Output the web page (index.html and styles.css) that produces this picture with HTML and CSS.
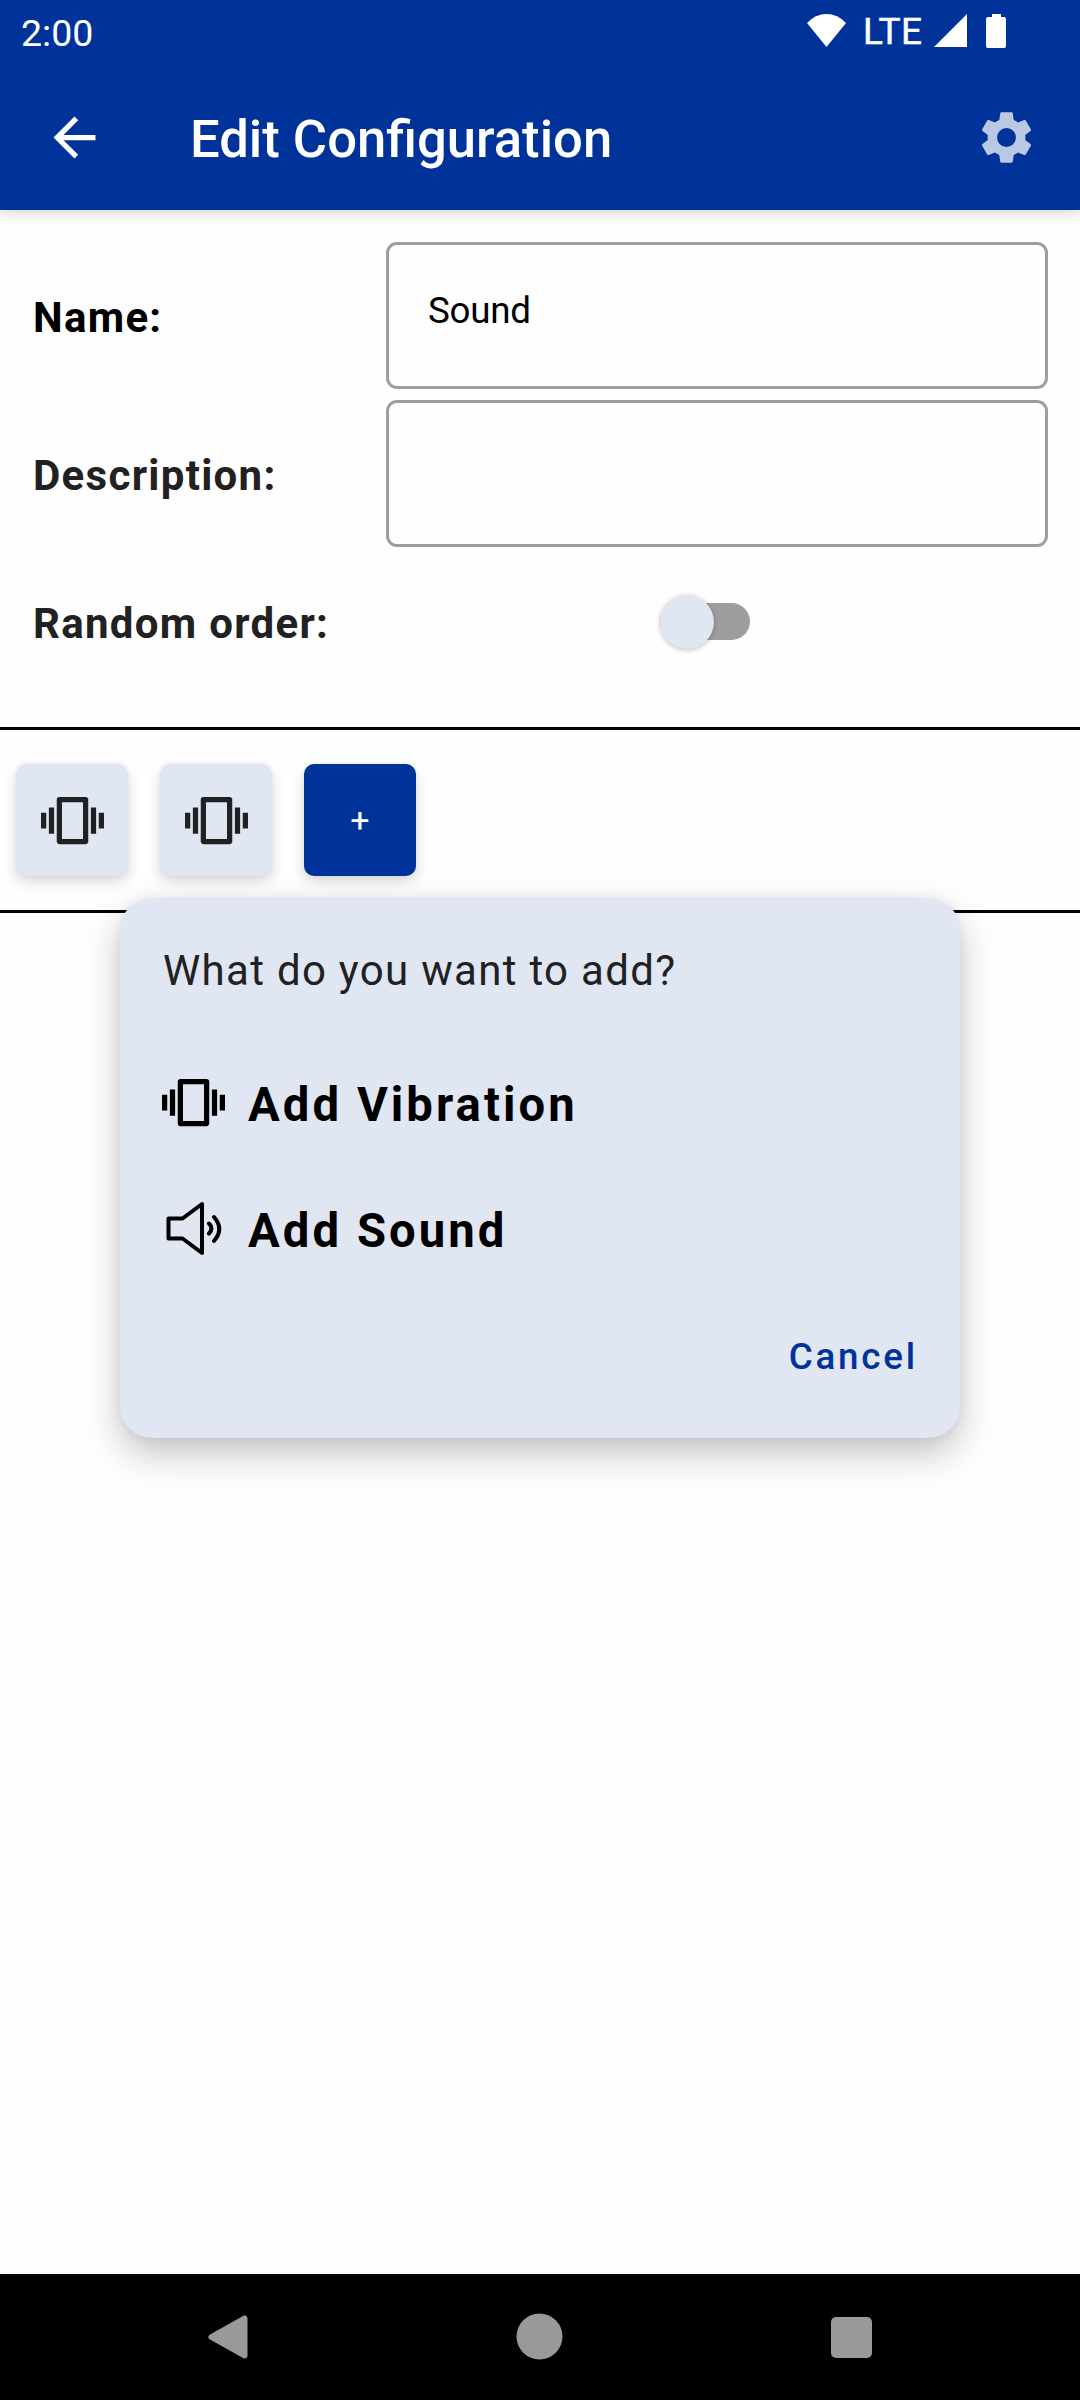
FILE: index.html
```html
<!DOCTYPE html>
<html lang="en">
<head>
<meta charset="utf-8">
<title>Edit Configuration</title>
<link rel="stylesheet" href="styles.css">
</head>
<body>
<svg class="defs" width="0" height="0" aria-hidden="true">
  <symbol id="vibration" viewBox="0 0 24 24"><path d="M0 15h2V9H0v6zm3 2h2V7H3v10zm19-8v6h2V9h-2zm-3 8h2V7h-2v10zM17 3H7C6.450 3 6 3.450 6 4v16c0 .55.45 1 1 1h10c.55 0 1-.45 1-1V4c0-.55-.45-1-1-1zM16 19H8V5h8v14z"/></symbol>
</svg>
<div class="screen">
  <header class="top">
    <div class="status">
      <span class="clock">2:00</span>
      <div class="indicators">
        <svg class="wifi" viewBox="0 0 39 33"><path d="M19.500 33L0 9Q8.500 0 19.500 0T39 9z"/></svg>
        <span class="lte">LTE</span>
        <svg class="signal" viewBox="0 0 32 32"><path d="M0 32L32 0v32z"/></svg>
        <svg class="battery" viewBox="0 0 20 34"><path d="M6 0h9v3h3a2 2 0 0 1 2 2v27a2 2 0 0 1-2 2H2a2 2 0 0 1-2-2V5a2 2 0 0 1 2-2h4z"/></svg>
      </div>
    </div>
    <div class="appbar">
      <svg class="icon" viewBox="0 0 24 24"><path d="M20 11H7.830l5.590-5.590L12 4l-8 8 8 8 1.410-1.410L7.830 13H20v-2z"/></svg>
      <h1 class="title">Edit Configuration</h1>
      <svg class="icon gear" viewBox="0 0 24 24"><path fill-rule="evenodd" d="M19.14,12.94c0.04-0.3,0.06-0.61,0.06-0.94c0-0.32-0.02-0.64-0.07-0.94l2.03-1.58c0.18-0.14,0.23-0.41,0.12-0.61l-1.92-3.32c-0.12-0.22-0.37-0.29-0.59-0.22l-2.39,0.96c-0.5-0.38-1.03-0.7-1.62-0.94L14.4,2.81c-0.04-0.24-0.24-0.41-0.48-0.41h-3.84c-0.24,0-0.43,0.17-0.47,0.41L9.25,5.35C8.66,5.59,8.12,5.92,7.63,6.29L5.24,5.33c-0.22-0.08-0.47,0-0.59,0.22L2.74,8.87C2.62,9.08,2.66,9.34,2.86,9.48l2.03,1.58C4.84,11.36,4.8,11.69,4.8,12s0.02,0.64,0.07,0.94l-2.03,1.58c-0.18,0.14-0.23,0.41-0.12,0.61l1.92,3.32c0.12,0.22,0.37,0.29,0.59,0.22l2.39-0.96c0.5,0.38,1.03,0.7,1.62,0.94l0.36,2.54c0.05,0.24,0.24,0.41,0.48,0.41h3.84c0.24,0,0.44-0.17,0.47-0.41l0.36-2.54c0.59-0.24,1.13-0.56,1.62-0.94l2.39,0.96c0.22,0.08,0.47,0,0.59-0.22l1.92-3.32c0.12-0.22,0.07-0.47-0.12-0.61L19.14,12.94zM12,15.600a3.600,3.600 0 1 1 0-7.200a3.600,3.600 0 1 1 0,7.200z"/></svg>
    </div>
  </header>
  <main class="content">
    <section class="form">
      <div class="row"><label class="label label-name">Name:</label><div class="field">Sound</div></div>
      <div class="row"><label class="label">Description:</label><div class="field"></div></div>
      <div class="row row-switch"><span class="label">Random order:</span><div class="switch"><span class="thumb"></span></div></div>
    </section>
    <section class="strip">
      <button class="tile"><svg class="icon"><use href="#vibration"/></svg></button>
      <button class="tile"><svg class="icon"><use href="#vibration"/></svg></button>
      <button class="tile tile-add">+</button>
    </section>
    <div class="dialog">
      <p class="question">What do you want to add?</p>
      <div class="option"><svg class="icon"><use href="#vibration"/></svg><span class="option-text">Add Vibration</span></div>
      <div class="option"><svg class="icon sound" viewBox="0 0 63 63"><path d="M6.500 21.500H20.500L40 7v49L20.500 41.500H6.500zM47 26.500q5 5 0 10M52 20q10.500 12 0 24"/></svg><span class="option-text">Add Sound</span></div>
      <button class="cancel">Cancel</button>
    </div>
  </main>
  <nav class="nav">
    <svg viewBox="0 0 48 48"><path d="M40.500 5.500v37L7.500 24z" stroke-width="6" stroke-linejoin="round" stroke="#999"/></svg>
    <svg viewBox="0 0 48 48"><circle cx="23.500" cy="23.500" r="23"/></svg>
    <svg viewBox="0 0 48 48"><rect x="3" y="4" width="41" height="41" rx="5"/></svg>
  </nav>
</div>
</body>
</html>
```
FILE: styles.css
```css
* { box-sizing: border-box; }
body { margin: 0; font-family: Roboto, sans-serif; background: #fefefe; }
button { border: 0; padding: 0; font-family: inherit; }
.defs { position: absolute; }
.screen { width: 1080px; height: 2400px; display: flex; flex-direction: column; overflow: hidden; }
.icon { width: 63px; height: 63px; flex: none; fill: currentColor; }
.top { height: 210px; background: #039; color: #fff; box-shadow: 0 2px 14px rgba(0,0,0,.18); }
.status { height: 63px; display: flex; justify-content: space-between; padding: 0 74px 0 21px; fill: #fff; }
.clock { font-size: 37.500px; line-height: 67px; }
.indicators { display: flex; align-items: flex-start; padding-top: 14px; }
.wifi { width: 39px; height: 33px; }
.lte { font-size: 37px; line-height: 36px; width: 61px; margin: 0 10px 0 17px; letter-spacing: .5px; -webkit-text-stroke: .5px #fff; }
.signal { width: 33px; height: 33px; }
.battery { width: 20px; height: 34px; margin-left: 19px; }
.appbar { height: 147px; display: flex; align-items: center; padding: 1px 42px 0 43px; }
.title { margin: 0 auto 0 84px; padding-top: 3px; font-size: 52.600px; font-weight: 500; line-height: 62px; }
.gear { color: #bbc8e4; }
.content { flex: 1; position: relative; }
.form { height: 517px; padding: 32px 32px 0 33px; display: flex; flex-direction: column; gap: 11px; }
.row { display: flex; align-items: center; height: 147px; }
.label { width: 353px; font-size: 42px; font-weight: 700; letter-spacing: 1.300px; color: #212121; padding-top: 4px; }
.label-name { color: #000; }
.field { flex: 1; height: 147px; border: 3px solid #9e9e9e; border-radius: 11px; padding: 44px 39px; font-size: 36.750px; line-height: 44px; letter-spacing: -.3px; color: #000; }
.row-switch { height: 126px; }
.switch { width: 90px; height: 37px; margin: 1px 0 0 274px; border-radius: 19px; background: #9e9e9e; display: flex; align-items: center; }
.thumb { width: 54px; height: 54px; border-radius: 50%; background: #e0e6f2; box-shadow: 0 1px 5px rgba(0,0,0,.25); }
.strip { height: 186px; border-top: 3px solid #000; border-bottom: 3px solid #000; padding: 34px 16px; display: flex; gap: 32px; }
.tile { width: 112px; height: 112px; border-radius: 10px; background: #e0e6f2; color: #202123; display: flex; align-items: center; justify-content: center; box-shadow: 0 6px 14px rgba(0,0,0,.14), 0 0 6px rgba(0,0,0,.05); }
.tile-add { background: #039; color: #fff; font-size: 34px; font-weight: 400; }
.dialog { position: absolute; left: 120px; top: 688px; width: 840px; height: 540px; border-radius: 32px; background: #e0e6f2; padding: 42px; display: flex; flex-direction: column; box-shadow: 0 16px 36px rgba(0,0,0,.23), 0 0 12px rgba(0,0,0,.06); }
.question { margin: 0 0 37px; padding-left: 1px; font-size: 42px; line-height: 62px; letter-spacing: 1.300px; color: #202123; }
.option { height: 126px; display: flex; align-items: center; gap: 23px; font-size: 47.250px; font-weight: 700; letter-spacing: 3.050px; color: #000; }
.option-text { padding-top: 6px; }
.sound { fill: none; stroke: currentColor; stroke-width: 4; stroke-linecap: round; stroke-linejoin: round; }
.cancel { align-self: flex-end; margin-top: 44px; background: none; color: #039; font-size: 36.750px; font-weight: 500; letter-spacing: 2.800px; }
.nav { height: 126px; background: #000; display: flex; align-items: center; padding: 0 204px; justify-content: space-between; fill: #999; }
.nav svg { width: 48px; height: 48px; }
```
